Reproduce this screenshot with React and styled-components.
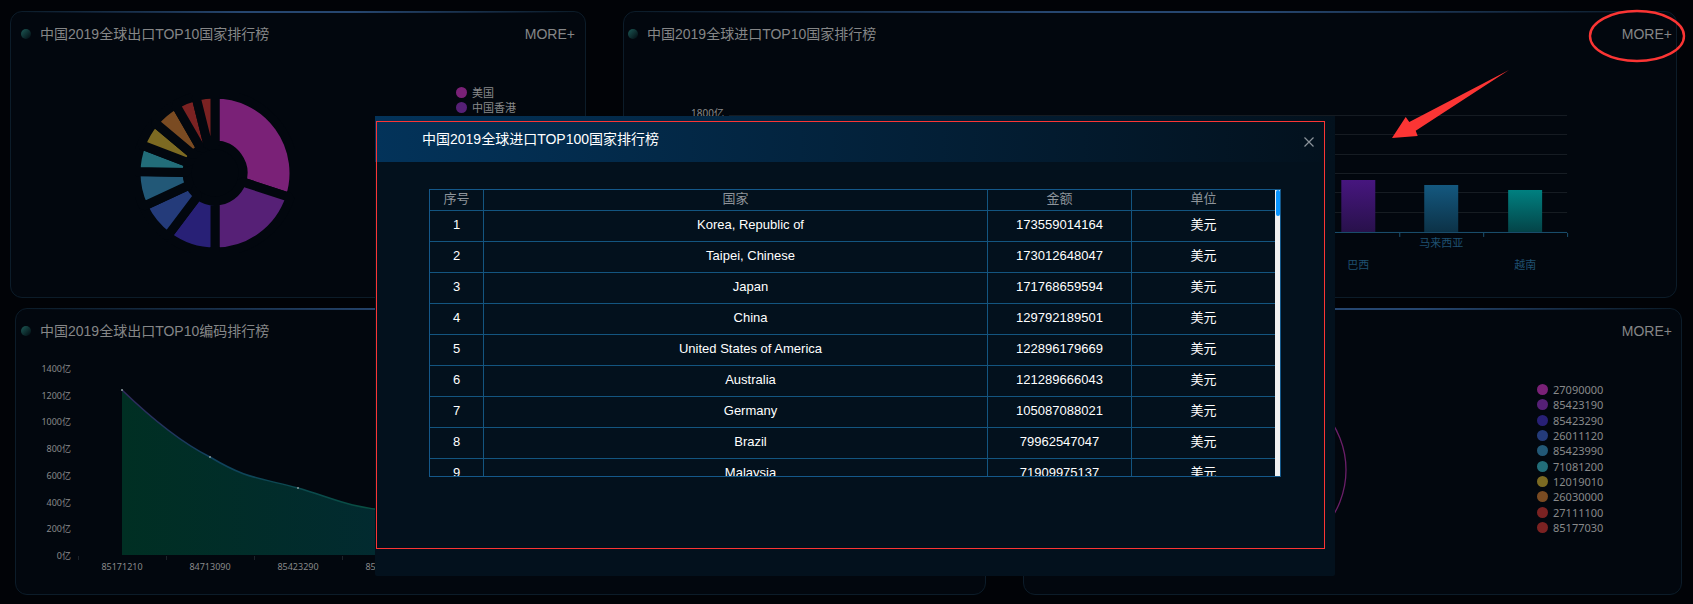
import React from 'react';
import styled, { createGlobalStyle } from 'styled-components';

const colors = ['#7a2177', '#562076', '#282076', '#243b7a', '#225877', '#226d79', '#7c6a22', '#7a4b22', '#7b2222', '#7b2222'];

// end angle of every slice, clockwise from the top
const donutAngles = [108, 180, 217, 245, 271, 291, 310, 330, 346, 360];

const countryLegend = ['美国', '中国香港'];
const codeLegend = ['27090000', '85423190', '85423290', '26011120', '85423990', '71081200', '12019010', '26030000', '27111100', '85177030'];

const rows = [
    ['Korea, Republic of', '173559014164'],
    ['Taipei, Chinese', '173012648047'],
    ['Japan', '171768659594'],
    ['China', '129792189501'],
    ['United States of America', '122896179669'],
    ['Australia', '121289666043'],
    ['Germany', '105087088021'],
    ['Brazil', '79962547047'],
    ['Malaysia', '71909975137'],
];

const bars = [
    { name: '巴西', x: 718, top: 123, labelY: 208, from: '#47167f', to: '#28114b' },
    { name: '马来西亚', x: 801, top: 128, labelY: 186, from: '#14587f', to: '#0c3247' },
    { name: '越南', x: 885, top: 133, labelY: 208, from: '#008080', to: '#044448' },
];

const Panel = ({ title, inset = 0, children }) => (
    <Frame $inset={inset}>
        <PanelHeader $inset={inset}>
            <Bullet />
            <PanelTitle>{title}</PanelTitle>
            <MoreLink href="#more">MORE+</MoreLink>
        </PanelHeader>
        {children}
    </Frame>
)

const Legend = ({ items, height }) => (
    <LegendList $height={height}>
        {items.map((item, i) => (
            <LegendItem key={item}><Dot $color={colors[i]} />{item}</LegendItem>
        ))}
    </LegendList>
)

const slicePath = (start, end) => {
    const point = (r, deg) => {
        const a = (deg - 90) * Math.PI / 180;
        return `${80 + r * Math.cos(a)} ${80 + r * Math.sin(a)}`;
    };
    return `M${point(79, start)} A79 79 0 0 1 ${point(79, end)} L${point(28, end)} A28 28 0 0 0 ${point(28, start)} Z`;
}

const Donut = () => (
    <svg width="160" height="160" viewBox="0 0 160 160">
        {donutAngles.map((end, i) => (
            <path
                key={end}
                d={slicePath(i ? donutAngles[i - 1] : 0, end)}
                fill={colors[i]}
                stroke="#02070e"
                strokeWidth="9"
                strokeLinejoin="bevel"
            />
        ))}
    </svg>
)

const Ring = () => (
    <svg width="176" height="176" viewBox="0 0 176 176">
        <circle cx="88" cy="88" r="87" fill="none" stroke="#6b1f69" strokeWidth="1.3" />
    </svg>
)

const BarChart = () => (
    <Chart viewBox="0 0 1053 240">
        <defs>
            {bars.map((bar, i) => (
                <linearGradient key={bar.name} id={`bar${i}`} x1="0" y1="0" x2="0" y2="1">
                    <stop offset="0" stopColor={bar.from} />
                    <stop offset="1" stopColor={bar.to} />
                </linearGradient>
            ))}
        </defs>
        <AxisText x="100" y="56" textAnchor="end" $size={10}>1800亿</AxisText>
        {[58, 77, 97, 116, 135, 155].map(y => (
            <rect key={y} x="105" y={y} width="839" height="1" fill="#171d24" />
        ))}
        {bars.map((bar, i) => (
            <g key={bar.name}>
                <rect x={bar.x} y={bar.top} width="34" height={175 - bar.top} fill={`url(#bar${i})`} />
                <AxisText x={bar.x + 17} y={bar.labelY} textAnchor="middle" $size={11} $color="#1f5070">{bar.name}</AxisText>
            </g>
        ))}
        <rect x="105" y="175" width="839" height="1" fill="#1b5170" />
        {[776, 860, 944].map(x => (
            <rect key={x} x={x} y="176" width="1" height="4" fill="#1b5170" />
        ))}
    </Chart>
)

const curve = 'M106 36 C134 63 164 88 194 103 C229 124 239 123 282 134 C314 143 334 154 370 156';

const LineChart = () => (
    <Chart viewBox="0 0 969 240">
        <defs>
            <linearGradient id="area">
                <stop offset="0" stopColor="#002f23" />
                <stop offset="1" stopColor="#022a30" />
            </linearGradient>
            <linearGradient id="line">
                <stop offset="0" stopColor="#33285e" />
                <stop offset="0.35" stopColor="#10425e" />
                <stop offset="0.7" stopColor="#0b4a4d" />
                <stop offset="1" stopColor="#07503f" />
            </linearGradient>
        </defs>
        {[1400, 1200, 1000, 800, 600, 400, 200, 0].map((value, i) => (
            <AxisText key={value} x="55" y={14 + Math.round(i * 26.7)} textAnchor="end" $size={9}>{value}亿</AxisText>
        ))}
        <path d={`${curve} V201 H106 Z`} fill="url(#area)" />
        <path d={curve} fill="none" stroke="url(#line)" strokeWidth="1.5" />
        {[[106, 36], [194, 103], [282, 134]].map(([x, y]) => (
            <circle key={x} cx={x} cy={y} r="1" fill="#8a9a9c" />
        ))}
        {[62, 150, 238, 326].map(x => (
            <rect key={x} x={x} y="202" width="1" height="4" fill="#1c232a" />
        ))}
        {['85171210', '84713090', '85423290', '85177030'].map((code, i) => (
            <AxisText key={code} x={106 + i * 88} y="212" textAnchor="middle" $size={9}>{code}</AxisText>
        ))}
    </Chart>
)

const RankingDialog = () => (
    <Overlay>
        <Dialog role="dialog" aria-labelledby="dialogTitle">
            <DialogHeader>
                <DialogTitle id="dialogTitle">中国2019全球进口TOP100国家排行榜</DialogTitle>
                <CloseButton type="button" aria-label="关闭">
                    <svg width="10" height="10" viewBox="0 0 10 10">
                        <path d="M0.5 0.5 L9.5 9.5 M9.5 0.5 L0.5 9.5" stroke="#8b939a" strokeWidth="1.2" />
                    </svg>
                </CloseButton>
            </DialogHeader>
            <DialogBody>
                <TableBox>
                    <TableClip>
                        <Table>
                            <colgroup>
                                <Col $width={54} />
                                <col />
                                <Col $width={144} />
                                <Col $width={143} />
                            </colgroup>
                            <thead>
                                <tr><Th>序号</Th><Th>国家</Th><Th>金额</Th><Th>单位</Th></tr>
                            </thead>
                            <tbody>
                                {rows.map(([country, amount], i) => (
                                    <tr key={country}>
                                        <Td>{i + 1}</Td>
                                        <CountryTd>{country}</CountryTd>
                                        <Td>{amount}</Td>
                                        <Td>美元</Td>
                                    </tr>
                                ))}
                            </tbody>
                        </Table>
                    </TableClip>
                    <ScrollTrack><ScrollThumb /></ScrollTrack>
                </TableBox>
            </DialogBody>
            <RedOutline />
        </Dialog>
    </Overlay>
)

const App = () => (
    <>
        <GlobalStyle />
        <Page>
            <TopRow>
                <Panel title="中国2019全球出口TOP10国家排行榜">
                    <PieBody>
                        <PieSlot $shift={38}><Donut /></PieSlot>
                        <Legend items={countryLegend} height={30} />
                    </PieBody>
                </Panel>
                <Panel title="中国2019全球进口TOP10国家排行榜" inset={6}>
                    <BarChart />
                </Panel>
            </TopRow>
            <BottomRow>
                <Panel title="中国2019全球出口TOP10编码排行榜" inset={5}>
                    <LineChart />
                </Panel>
                <Panel title="中国2019全球进口TOP10编码排行榜" inset={1}>
                    <PieBody $wide>
                        <PieSlot $shift={44}><Ring /></PieSlot>
                        <Legend items={codeLegend} height={153} />
                    </PieBody>
                </Panel>
            </BottomRow>
        </Page>

        <RankingDialog />

        <Marks width="320" height="160" viewBox="0 0 320 160">
            <ellipse cx="264" cy="36" rx="47" ry="25" fill="none" stroke="#fb3534" strokeWidth="2.4" />
            <path d="M19 138 L32.7 117 L36.3 122 L136 70 L42.7 130.7 L44.7 136 Z" fill="#fb3534" />
        </Marks>
    </>
)

const GlobalStyle = createGlobalStyle`
    * {
        box-sizing: border-box;
    }

    body {
        margin: 0;
        background: #010307;
        font-family: "Liberation Sans", Arial, "Noto Sans CJK SC", sans-serif;
    }
`

const Page = styled.main`
    display: grid;
    gap: 10px;
    padding: 11px 10px 9px;
`;

const TopRow = styled.div`
    display: grid;
    grid-template-columns: minmax(0, 576fr) minmax(0, 1066fr);
    gap: 31px;
`;

const BottomRow = styled(TopRow)`
    grid-template-columns: minmax(0, 981fr) minmax(0, 661fr);
`;

const Frame = styled.section`
    position: relative;
    min-height: 287px;
    margin: 0 ${props => props.$inset}px;
    border: 1px solid #0c1c29;
    border-radius: 12px;
    background: #02070e;

    &::before {
        content: "";
        position: absolute;
        top: -1px;
        left: 10px;
        right: 10px;
        height: 2px;
        background: linear-gradient(90deg, transparent, #26466f 40%, #26466f 60%, transparent);
    }
`;

const PanelHeader = styled.header`
    display: flex;
    align-items: center;
    height: 43px;
    margin-bottom: 2px;
    padding: 0 ${props => 10 - props.$inset}px;
`;

const Bullet = styled.span`
    width: 10px;
    height: 10px;
    margin-right: 9px;
    border-radius: 50%;
    background: linear-gradient(135deg, #1d5a56, #05151a 85%);
`;

const PanelTitle = styled.h2`
    flex: 1;
    margin: 0;
    font-size: 14px;
    font-weight: normal;
    line-height: 20px;
    color: #858687;
    white-space: nowrap;
`;

const MoreLink = styled.a`
    font-size: 14px;
    line-height: 20px;
    color: #858687;
    text-decoration: none;
`;

const PieBody = styled.div`
    display: grid;
    grid-template-columns: minmax(0, 1fr) ${props => props.$wide ? 144 : 129}px;
`;

const PieSlot = styled.div`
    display: flex;
    align-items: center;
    justify-content: center;
    height: 232px;
    padding-right: ${props => props.$shift}px;
`;

const LegendList = styled.ul`
    display: grid;
    height: ${props => props.$height}px;
    margin: 28px 0 0;
    padding: 0;
    list-style: none;
`;

const LegendItem = styled.li`
    display: flex;
    align-items: center;
    gap: 5px;
    font-family: "Noto Sans", "Noto Sans CJK SC", sans-serif;
    font-size: 11px;
    line-height: 15px;
    color: #88898a;
`;

const Dot = styled.span`
    width: 11px;
    height: 11px;
    border-radius: 50%;
    background: ${props => props.$color};
`;

const Chart = styled.svg`
    display: block;
    width: 100%;
    height: 240px;
`;

const AxisText = styled.text`
    font-family: "Noto Sans", "Noto Sans CJK SC", sans-serif;
    font-size: ${props => props.$size}px;
    dominant-baseline: central;
    fill: ${props => props.$color || '#88898a'};
`;

const Overlay = styled.div`
    position: absolute;
    top: 0;
    left: 0;
    right: 0;
    display: flex;
    justify-content: center;
    padding: 116px 0 0 17px;
`;

const Dialog = styled.div`
    position: relative;
    width: 960px;
    max-width: 100%;
    border-radius: 2px;
    background: #03111d;
`;

const DialogHeader = styled.header`
    display: flex;
    align-items: center;
    justify-content: space-between;
    height: 46px;
    padding: 0 21px 0 47px;
    background: linear-gradient(90deg, #03335a, #03111d);
`;

const DialogTitle = styled.h2`
    margin: 0;
    font-size: 14px;
    font-weight: normal;
    line-height: 20px;
    color: #fff;
`;

const CloseButton = styled.button`
    display: flex;
    padding: 6px 0 0;
    border: 0;
    background: none;
    cursor: pointer;
`;

const DialogBody = styled.div`
    padding: 27px 54px 99px;
`;

const TableBox = styled.div`
    display: flex;
    height: 288px;
    border: 1px solid #14588a;
`;

const TableClip = styled.div`
    flex: 1;
    min-width: 0;
    overflow: hidden;
`;

const Table = styled.table`
    width: 100%;
    table-layout: fixed;
    border-collapse: separate;
    border-spacing: 0;
    font-size: 13px;
    text-align: center;
`;

const Col = styled.col`
    width: ${props => props.$width}px;
`;

const Td = styled.td`
    height: 31px;
    padding: 0 0 2px;
    border-right: 1px solid #135580;
    border-bottom: 1px solid #135580;
    line-height: 18px;
    color: #fff;

    &:last-child {
        border-right: 0;
    }
`;

const CountryTd = styled(Td)`
    padding-left: 30px;
`;

const Th = styled(Td).attrs({ as: 'th' })`
    height: 21px;
    font-weight: normal;
    color: #8e949a;
`;

const ScrollTrack = styled.div`
    width: 5px;
    padding-left: 1px;
    background: #f0f0f0;
`;

const ScrollThumb = styled.div`
    height: 26px;
    border-radius: 2px;
    background: #0a95ff;
`;

const RedOutline = styled.div`
    position: absolute;
    top: 5px;
    right: 10px;
    bottom: 27px;
    left: 1px;
    border: 1px solid #fb3534;
    pointer-events: none;
`;

const Marks = styled.svg`
    position: absolute;
    top: 0;
    right: 0;
    pointer-events: none;
`;

export default App;
